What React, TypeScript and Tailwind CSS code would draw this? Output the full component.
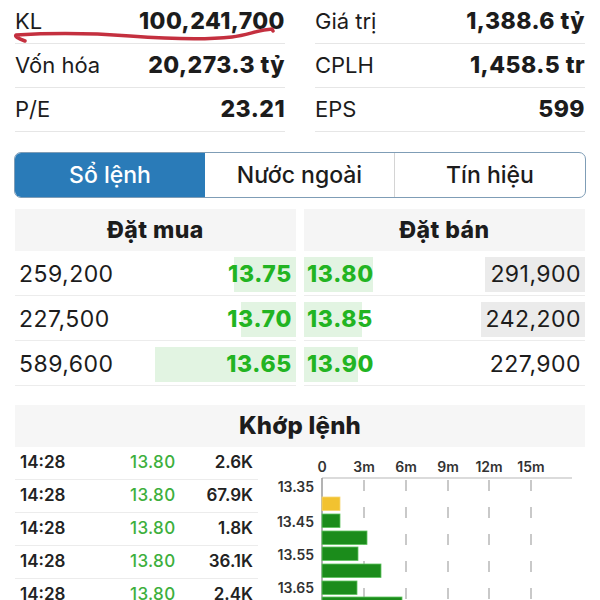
const font = { fontFamily: 'Inter, "Noto Sans", sans-serif' }

const stats = [
  ['KL', '100,241,700', 'Giá trị', '1,388.6 tỷ'],
  ['Vốn hóa', '20,273.3 tỷ', 'CPLH', '1,458.5 tr'],
  ['P/E', '23.21', 'EPS', '599'],
]

// bar widths in px, measured from the picture
const book = [
  { bidVol: '259,200', bid: '13.75', bidBar: 62, ask: '13.80', askBar: 69, askVol: '291,900', volBar: 100 },
  { bidVol: '227,500', bid: '13.70', bidBar: 55, ask: '13.85', askBar: 58, askVol: '242,200', volBar: 104 },
  { bidVol: '589,600', bid: '13.65', bidBar: 141, ask: '13.90', askBar: 54, askVol: '227,900', volBar: 0 },
]

const trades = [
  ['14:28', '13.80', '2.6K'],
  ['14:28', '13.80', '67.9K'],
  ['14:28', '13.80', '1.8K'],
  ['14:28', '13.80', '36.1K'],
  ['14:28', '13.80', '2.4K'],
]

function StatCell({ label, value }: { label: string; value: string }) {
  return (
    <div className="flex h-[44px] items-center justify-between border-b border-[#e6e6e6]">
      <span className="text-[22px] text-[#1c1c1c]">{label}</span>
      <span className="text-[23px] font-extrabold tracking-[0.02em] text-[#1c1c1c]">{value}</span>
    </div>
  )
}

function VolumeChart() {
  const ticks = [
    ['0', 52],
    ['3m', 94],
    ['6m', 136],
    ['9m', 178],
    ['12m', 219],
    ['15m', 261],
  ] as const
  const bars = [
    { y: 50, w: 18, c: '#f2c230' },
    { y: 67, w: 18, c: '#1b8c1b' },
    { y: 84, w: 45, c: '#1b8c1b' },
    { y: 100, w: 36, c: '#1b8c1b' },
    { y: 117, w: 59, c: '#1b8c1b' },
    { y: 134, w: 35, c: '#1b8c1b' },
    { y: 150, w: 80, c: '#1b8c1b' },
  ]
  const labels = [
    ['13.35', 45],
    ['13.45', 80],
    ['13.55', 113],
    ['13.65', 146],
  ] as const

  return (
    <svg width="315" height="153" viewBox="0 0 315 153" className="block">
      {ticks.slice(1).map(([, x]) => (
        <line key={x} x1={x} y1={33} x2={x} y2={153} stroke="#b8b8b8" strokeWidth="1.5" strokeDasharray="11 16" />
      ))}
      <line x1={52} y1={31} x2={302} y2={31} stroke="#cfcfcf" strokeWidth="1.5" />
      <line x1={52} y1={31} x2={52} y2={153} stroke="#9a9a9a" strokeWidth="1.5" />
      {ticks.map(([t, x]) => (
        <text key={t} x={x} y={25} textAnchor="middle" fontSize="14" fontWeight="600" fill="#333" style={font}>
          {t}
        </text>
      ))}
      {labels.map(([t, y]) => (
        <text key={t} x={44} y={y} textAnchor="end" fontSize="14" fontWeight="600" fill="#333" style={font}>
          {t}
        </text>
      ))}
      {bars.map((b) => (
        <rect key={b.y} x={52} y={b.y} width={b.w} height={13.5} fill={b.c} stroke={b.c === '#1b8c1b' ? '#5fc45f' : '#f7d774'} strokeWidth="0.8" />
      ))}
    </svg>
  )
}

export default function App() {
  return (
    <div className="relative h-[600px] w-[600px] overflow-hidden bg-white" style={font}>
      {/* stats */}
      <div className="grid grid-cols-2 gap-x-[30px] px-[15px]">
        {stats.map(([l1, v1, l2, v2]) => [
          <StatCell key={l1} label={l1} value={v1} />,
          <StatCell key={l2} label={l2} value={v2} />,
        ])}
      </div>

      {/* hand-drawn red underline */}
      <svg className="pointer-events-none absolute left-0 top-0" width="300" height="50">
        <path
          d="M 25 41 Q 14 37 16 35 C 50 33 90 33 130 36 C 170 39 205 40 232 37 C 248 35 258 30 272 29 L 273 31"
          fill="none"
          stroke="#c4303f"
          strokeWidth="3.5"
          strokeLinecap="round"
          strokeLinejoin="round"
        />
      </svg>

      {/* tabs */}
      <div className="mx-[14px] mt-[20px] grid h-[46px] grid-cols-3 overflow-hidden rounded-[7px] border border-[#7f9db6] text-[23px] font-medium">
        <div className="flex items-center justify-center bg-[#2a7bb8] text-white">Sổ lệnh</div>
        <div className="flex items-center justify-center border-r border-[#d4d4d4] text-[#1c1c1c]">Nước ngoài</div>
        <div className="flex items-center justify-center text-[#1c1c1c]">Tín hiệu</div>
      </div>

      {/* order book */}
      <div className="mt-[11px] grid grid-cols-2 gap-x-[8px] pl-[15px] pr-[15px]">
        <div className="flex h-[42px] items-center justify-center bg-[#f5f5f5] text-[23px] font-extrabold tracking-[0.02em] text-[#1c1c1c]">Đặt mua</div>
        <div className="flex h-[42px] items-center justify-center bg-[#f5f5f5] text-[23px] font-extrabold tracking-[0.02em] text-[#1c1c1c]">Đặt bán</div>
        {book.map((r) => [
          <div key={r.bidVol} className="flex h-[45px] items-center justify-between border-b border-[#ececec] pb-[3px] pt-[6px]">
            <span className="pl-[4px] text-[23px] tracking-[0.02em] text-[#1c1c1c]">{r.bidVol}</span>
            <div className="relative flex h-full items-center justify-end">
              <div className="absolute bottom-0 right-0 top-0 bg-[#e2f4e2]" style={{ width: r.bidBar }} />
              <span className="relative pr-[4px] text-[23px] font-extrabold tracking-[0.03em] text-[#22b422]">{r.bid}</span>
            </div>
          </div>,
          <div key={r.askVol} className="flex h-[45px] items-center justify-between border-b border-[#ececec] pb-[3px] pt-[6px]">
            <div className="relative flex h-full items-center">
              <div className="absolute bottom-0 left-0 top-0 bg-[#e2f4e2]" style={{ width: r.askBar }} />
              <span className="relative pl-[3px] text-[23px] font-extrabold tracking-[0.03em] text-[#22b422]">{r.ask}</span>
            </div>
            <div className="relative flex h-full items-center justify-end">
              <div className="absolute bottom-0 right-0 top-0 bg-[#ebebeb]" style={{ width: r.volBar }} />
              <span className="relative pr-[4px] text-[23px] tracking-[0.02em] text-[#1c1c1c]">{r.askVol}</span>
            </div>
          </div>,
        ])}
      </div>

      {/* matched orders */}
      <div className="mx-[15px] mt-[19px] flex h-[42px] items-center justify-center bg-[#f6f6f6] text-[24px] font-extrabold tracking-[0.01em] text-[#1c1c1c]">
        Khớp lệnh
      </div>
      <div className="flex pl-[15px]">
        <div className="w-[243px]">
          {trades.map(([t, p, v], i) => (
            <div key={i} className="flex h-[33px] items-center border-b border-[#ececec] text-[17px]">
              <span className="w-[115px] pl-[5px] font-semibold text-[#222]">{t}</span>
              <span className="w-[60px] font-medium tracking-[0.02em] text-[#3daf3d]">{p}</span>
              <span className="flex-1 pr-[5px] text-right font-semibold text-[#222]">{v}</span>
            </div>
          ))}
        </div>
        <div className="ml-[12px]">
          <VolumeChart />
        </div>
      </div>
    </div>
  )
}
